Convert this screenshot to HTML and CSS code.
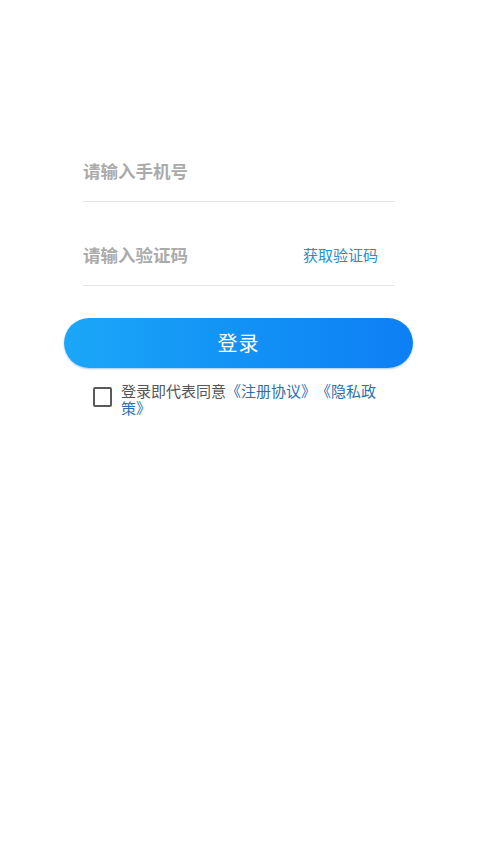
FILE: index.html
```html
<!DOCTYPE html>
<html lang="zh-CN">
<head>
<meta charset="utf-8">
<title>登录</title>
<link rel="stylesheet" href="styles.css">
</head>
<body>
<main class="page">
  <form class="form">
    <div class="field">
      <input class="input" type="tel" placeholder="请输入手机号">
    </div>
    <div class="field field-code">
      <input class="input" type="text" placeholder="请输入验证码">
      <button type="button" class="code-btn">获取验证码</button>
    </div>
  </form>
  <button type="button" class="login-btn">登录</button>
  <div class="agree">
    <span class="checkbox"></span>
    <p class="agree-text">登录即代表同意<a class="link">《注册协议》《隐私政策》</a></p>
  </div>
</main>
</body>
</html>
```
FILE: styles.css
```css
* { box-sizing: border-box; }
html, body { margin: 0; padding: 0; background: #ffffff; }
body {
  font-family: "Noto Sans CJK SC", "Noto Sans", sans-serif;
  width: 478px;
  height: 850px;
  text-spacing-trim: space-all;
}
.page {
  display: flex;
  flex-direction: column;
  padding-top: 143px;
}
.form {
  margin: 0 83px;
  display: flex;
  flex-direction: column;
  gap: 25px;
}
.field {
  height: 59px;
  display: flex;
  align-items: center;
  padding-bottom: 4px;
  border-bottom: 1px solid #e6e6e6;
}
.input {
  flex: 1;
  min-width: 0;
  border: none;
  outline: none;
  background: transparent;
  padding: 0;
  font-family: inherit;
  font-size: 17.5px;
  font-weight: 700;
  color: #333;
  height: 30px;
}
.input::placeholder {
  color: #ababab;
  font-weight: 700;
}
.code-btn {
  border: none;
  background: none;
  padding: 0 17px 0 0;
  font-family: inherit;
  font-size: 15px;
  color: #2a8dd0;
  text-spacing-trim: space-all;
}
.login-btn {
  margin: 32px 65px 0 64px;
  height: 50px;
  padding-bottom: 2px;
  border: none;
  border-radius: 25px;
  background: linear-gradient(90deg, #1ba7f8 0%, #1394f6 45%, #0d7ff5 100%);
  box-shadow: 0 1px 2px rgba(20, 100, 200, 0.35);
  color: #ffffff;
  font-family: inherit;
  font-size: 20px;
  letter-spacing: 1px;
}
.agree {
  display: flex;
  align-items: flex-start;
  margin: 14px 0 0 93px;
}
.checkbox {
  width: 19px;
  height: 20px;
  margin-top: 5px;
  border: 2px solid #5a5a5a;
  border-radius: 2px;
  flex: none;
}
.agree-text {
  margin: 0 0 0 9px;
  width: 262px;
  font-size: 15px;
  line-height: 17px;
  color: #555555;
  text-spacing-trim: space-all;
}
.link {
  color: #2d6fae;
}
```
